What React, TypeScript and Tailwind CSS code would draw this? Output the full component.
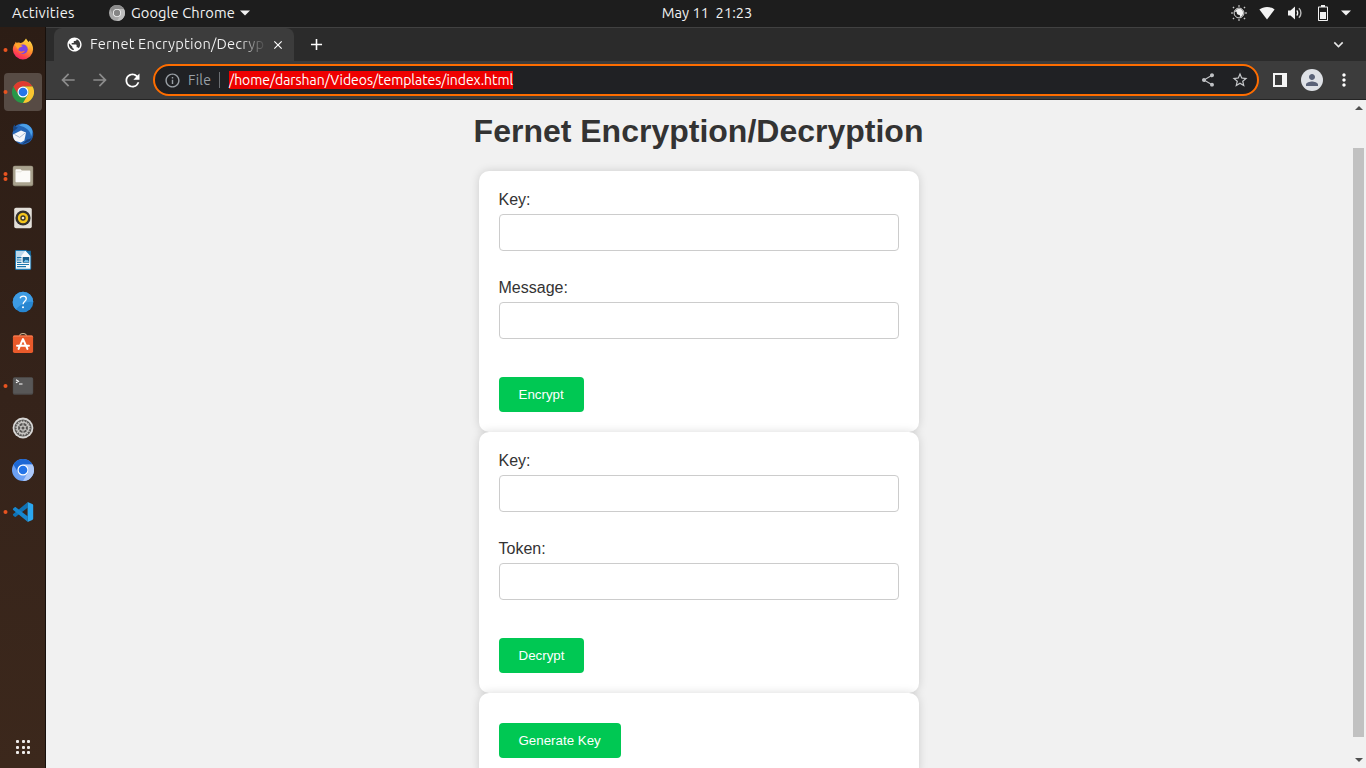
import type { ReactNode } from "react";
import {
  MdAdd,
  MdArrowBack,
  MdArrowForward,
  MdClose,
  MdExpandMore,
  MdInfoOutline,
  MdMoreVert,
  MdPerson,
  MdPublic,
  MdRefresh,
  MdShare,
  MdStarBorder,
} from "react-icons/md";

/* ---------- Dock icons ---------- */

function FirefoxIcon() {
  return (
    <svg className="-translate-y-px" width="22" height="22" viewBox="0 0 22 22">
      <defs>
        <linearGradient id="fx" x1="0.8" y1="0" x2="0.3" y2="1">
          <stop offset="0" stopColor="#ffe14a" />
          <stop offset="0.45" stopColor="#ff9a2a" />
          <stop offset="0.8" stopColor="#ff4150" />
          <stop offset="1" stopColor="#f0246e" />
        </linearGradient>
      </defs>
      <path
        d="M14 .4c1 1.300 1.300 2 2.600 3.500 1-.2.600-1 .8-1.500 2 2 4 5.400 3.700 9.200A10.100 10.100 0 0 1 11 21.400 10.100 10.100 0 0 1 .8 11.500c0-2.700 1-4.700 2.300-6.300l.6-1.500 1.200 1.200c1-.5 2-.3 3.300 0C10 5 12 3.500 14 .4Z"
        fill="url(#fx)"
      />
      <circle cx="11" cy="11.200" r="4.700" fill="#7a45e5" />
      <path d="M2.600 6.700c1.800-1.500 4-1.200 5.400.6 1.200-.3 2.300.2 2.800 1-1.300.1-1.700.9-3 1.200-1.300.4-1.500 1.200-1.100 2.300-1.800-1-1.900-3-4.100-5.100Z" fill="#ffa62b" />
      <path d="M12 6c3 .2 4.500 2.400 4.300 5.100 2-2.800.7-6-1.700-7.900C14 4.700 13 5.500 12 6Z" fill="#ffbf35" />
      <path d="M6.200 11.800c.8 1.400 2.300 2 4 1.600 1-.3 1.700-.8 2.500-.5-.3 1.700-2.600 2.700-4.700 2-1.100-.4-1.700-1.600-1.800-3.100Z" fill="#ff7139" />
    </svg>
  );
}

function BrowserWheel({ a, b, c, core, ring, size }: { a: string; b: string; c: string; core: string; ring: string; size: number }) {
  return (
    <svg width={size} height={size} viewBox="0 0 48 48">
      <circle cx="24" cy="24" r="24" fill={b} />
      <path d="M3.200 12a24 24 0 0 1 41.600 0H24a12 12 0 0 0-10.400 18Z" fill={a} />
      <path d="M44.800 12A24 24 0 0 1 24 48l10.400-18A12 12 0 0 0 24 12Z" fill={c} />
      <circle cx="24" cy="24" r="12" fill={ring} />
      <circle cx="24" cy="24" r="9.500" fill={core} />
    </svg>
  );
}

function ThunderbirdIcon() {
  return (
    <svg width="22" height="22" viewBox="0 0 22 22">
      <path d="M3 3.500C7-.5 15-.6 19 4.500c3 4 3 9 0 13-3 3.500-8 5-12 3C3 18.500 0 14.500.6 9.500L3 3.500Z" fill="#2565b5" />
      <path d="M7 2.500c5-3 11-1 13 4 1 3-.2 5-1 7C19 8 14 4 7 2.500Z" fill="#4ba0e8" />
      <path d="M1 6c0-2 .8-3.700 1.500-4.500C3 3.500 4 4.500 6 4.500L2 8Z" fill="#194783" />
      <path d="m1 11.500 8-4 5 1.900-1.600 8-3.500 2-5.500-1.300C1.500 16 .7 13.500 1 11.500Z" fill="#f4f6fa" />
      <path d="m2.500 11.500 5.200 2.900 5.500-4.400" fill="none" stroke="#a8b8d0" strokeWidth="1" />
      <path d="m10 21.500 8-3.500 2.500-4.500c-1 2-3.500 3-5.500 3l-.6.700Z" fill="#183e78" />
    </svg>
  );
}

function FilesIcon() {
  return (
    <svg width="22" height="22" viewBox="0 0 22 22">
      <rect x=".8" y=".8" width="20.400" height="20.400" rx="2" fill="#8f8975" />
      <rect x="1.300" y="1.300" width="19.400" height="18.600" rx="1.600" fill="#aaa38f" />
      <path d="M3.500 5.200c0-.7.400-1 1-1h4l1.300 1.300h7.500c.7 0 1 .4 1 1v9.700c0 .7-.4 1-1 1H4.500c-.6 0-1-.3-1-1Z" fill="#fbfaf8" />
      <path d="M4.200 6.800h4.700l1-1" stroke="#dcd8ce" strokeWidth=".7" fill="none" />
    </svg>
  );
}

function RhythmboxIcon() {
  return (
    <svg width="22" height="22" viewBox="0 0 22 22">
      <rect x="2.200" y=".8" width="17.600" height="20.400" rx="1.800" fill="#e3dfd9" />
      <circle cx="11" cy="11" r="7.600" fill="#33312e" />
      <circle cx="11" cy="11" r="5.200" fill="#f4c51d" />
      <circle cx="11" cy="11" r="2.700" fill="#3b3729" />
      <circle cx="11" cy="11" r="1.300" fill="#f3ead0" />
    </svg>
  );
}

function WriterIcon() {
  return (
    <svg width="22" height="22" viewBox="0 0 22 22">
      <path d="M4.500 1h9.700l5 5.500v13c0 .9-.6 1.500-1.500 1.500H4.500C3.600 21 3 20.400 3 19.500v-17C3 1.600 3.600 1 4.500 1Z" fill="#1f77ae" />
      <path d="M4 2h9.800l4.500 5v12.800H4Z" fill="#f6f9fb" />
      <path d="M3 1.500h10.500L3 15Z" fill="#2383bd" opacity=".28" />
      <path d="M14 1.800h4.800v5Z" fill="#1671aa" />
      <path d="M5 8.700h4.500M5 11h4.500M5 13.300h4.500M5 15.500h12M5 17.700h9" stroke="#1c76ad" strokeWidth="1.200" />
      <rect x="10.700" y="8" width="6.500" height="5.700" fill="#175d8a" />
      <path d="m11.500 13 2.300-2.600 1.200 1.200.8-.7 1.200 2.100Z" fill="#72c1ed" />
    </svg>
  );
}

function HelpIcon() {
  return (
    <svg width="22" height="22" viewBox="0 0 22 22">
      <circle cx="11" cy="11" r="10.300" fill="#2786d1" />
      <path d="M.7 11a10.300 10.300 0 0 1 20.600 0c-6-1-12 2-17.500 7.300A10 10 0 0 1 .7 11Z" fill="#3d9be3" />
      <path d="M8 7.200c.6-1.400 1.700-2 3.200-2 1.800 0 3.100 1 3.100 2.600 0 2.400-3.200 2.600-3.200 5.500" fill="none" stroke="#fff" strokeWidth="1.300" />
      <circle cx="11" cy="16.200" r="1" fill="#fff" />
    </svg>
  );
}

function SoftwareIcon() {
  return (
    <svg className="-translate-y-px" width="22" height="22" viewBox="0 0 22 22">
      <path d="M7.500 4.500C7.500.5 14.500.5 14.500 4.500" fill="none" stroke="#d1b795" strokeWidth="1.200" />
      <rect x=".9" y="3.500" width="20.200" height="17.500" rx="1.700" fill="#e95a2b" />
      <path d="M1 4.800c0-.8.700-1.300 1.600-1.300h16.800c.9 0 1.600.5 1.600 1.300Z" fill="#f17b51" />
      <path d="m6.500 17 4.500-10 4.500 10M5 13.800h12" fill="none" stroke="#fff" strokeWidth="1.900" strokeLinecap="round" strokeLinejoin="round" />
    </svg>
  );
}

function TerminalIcon() {
  return (
    <svg width="22" height="22" viewBox="0 0 22 22">
      <rect x=".8" y="2.300" width="20.400" height="17.400" rx="1.700" fill="#4c4b4b" />
      <rect x="1.300" y="2.700" width="19.400" height="15.700" rx="1.300" fill="#585757" />
      <path d="m4 4.800 2.500 1.500L4 7.800M7 9h3.500" fill="none" stroke="#fff" strokeWidth="1.100" />
    </svg>
  );
}

function SettingsIcon() {
  return (
    <svg width="22" height="22" viewBox="0 0 22 22">
      <circle cx="11" cy="11" r="10.400" fill="#d8d7d5" />
      <circle cx="11" cy="11" r="8.600" fill="#565452" />
      <circle cx="11" cy="11" r="5.700" fill="none" stroke="#c7c5c2" strokeWidth="1.500" />
      <circle cx="11" cy="11" r="6.900" fill="none" stroke="#c7c5c2" strokeWidth="1.200" strokeDasharray="1.500 1.210" />
      <circle cx="11" cy="11" r="2.200" fill="none" stroke="#c7c5c2" strokeWidth="1.300" />
      <path d="M11 5v3.500M11 13.500V17M5.800 8l3 1.700M13.200 12.300l3 1.700M5.800 14l3-1.700M13.200 9.700l3-1.700" stroke="#c7c5c2" strokeWidth="1" />
    </svg>
  );
}

function CodeIcon() {
  return (
    <svg width="22" height="22" viewBox="0 0 22 22">
      <path d="M15.600 1.200v5.600L3.800 15.700c-.4.300-.8.300-1.100 0L1.200 14.400c-.4-.4-.4-1 0-1.400Z" fill="#0f72b5" />
      <path d="M15.600 20.800v-5.600L3.800 6.300c-.4-.3-.8-.3-1.100 0L1.200 7.600c-.4.4-.4 1 0 1.400Z" fill="#1787cf" />
      <path d="m15.600.9 4.700 2.200c.6.300.9.800.9 1.400v13c0 .6-.3 1.100-.9 1.400l-4.700 2.200Z" fill="#2ba7ef" />
    </svg>
  );
}

function DockItem({ dots = 0, active = false, children }: { dots?: number; active?: boolean; children: ReactNode }) {
  return (
    <div className="flex h-[42px] w-[45px] items-center">
      <div className="flex w-1 flex-none translate-x-[3.500px] flex-col items-center gap-px">
        {Array.from({ length: dots }, (_, i) => (
          <span key={i} className="h-1 w-1 flex-none rounded-full bg-[#e95420]" />
        ))}
      </div>
      <div className={`flex h-[38px] w-[38px] flex-none items-center justify-center rounded ${active ? "bg-[#574b44]" : ""}`}>{children}</div>
    </div>
  );
}

function Dock() {
  return (
    <aside className="flex w-[46px] flex-none flex-col border-r border-[#17100c] bg-gradient-to-b from-[#2c1d15] via-[#35231a] to-[#3c281c] pt-[2px]">
      <DockItem dots={1}><FirefoxIcon /></DockItem>
      <DockItem dots={1} active><BrowserWheel size={22} a="#df3b30" b="#279847" c="#fbc530" ring="#fff" core="#2674e8" /></DockItem>
      <DockItem><ThunderbirdIcon /></DockItem>
      <DockItem dots={2}><FilesIcon /></DockItem>
      <DockItem><RhythmboxIcon /></DockItem>
      <DockItem><WriterIcon /></DockItem>
      <DockItem><HelpIcon /></DockItem>
      <DockItem><SoftwareIcon /></DockItem>
      <DockItem dots={1}><TerminalIcon /></DockItem>
      <DockItem><SettingsIcon /></DockItem>
      <DockItem><BrowserWheel size={22} a="#1d68d5" b="#6ba0f4" c="#acc8f9" ring="#fff" core="#2474e7" /></DockItem>
      <DockItem dots={1}><CodeIcon /></DockItem>
      <div className="mt-auto mb-[14px] ml-4 grid w-[14px] grid-cols-3 gap-[2.500px]">
        {Array.from({ length: 9 }, (_, i) => (
          <span key={i} className="h-[3px] w-[3px] rounded-[1px] bg-[#efedeb]" />
        ))}
      </div>
    </aside>
  );
}

/* ---------- System bar ---------- */

function SystemTray() {
  return (
    <div className="flex items-center text-[#f2f2f2]">
      <svg className="mr-3" width="16" height="16" viewBox="0 0 16 16">
        <circle cx="8" cy="8" r="4.900" fill="none" stroke="currentColor" strokeWidth=".9" />
        <path d="M7.200 3.800a4.200 4.200 0 1 0 5 5.200C10 10 6.300 8 7.200 3.800Z" fill="currentColor" transform="rotate(180 8 8)" />
        <circle cx="8.600" cy="7" r="3" fill="currentColor" />
        <path d="M8 .2v1.600M8 14.200v1.600M.2 8h1.600M14.200 8h1.600M2 2l1 1M13 13l1 1M2 14l1-1M13 3l1-1" stroke="currentColor" strokeWidth="1.500" opacity=".8" />
      </svg>
      <svg className="mr-3" width="16" height="16" viewBox="0 0 16 16">
        <path d="M8 14.500.4 4.500C4.500 1 11.500 1 15.600 4.500Z" fill="currentColor" />
      </svg>
      <svg className="mr-3" width="16" height="16" viewBox="0 0 16 16">
        <path d="M1 5.500h2.500L8 1.500v13l-4.500-4H1Z" fill="currentColor" />
        <path d="M9.700 5.500c1.300 1.200 1.300 3.800 0 5" fill="none" stroke="currentColor" strokeWidth="1.400" />
        <path d="M11.900 3.300c2.700 2.400 2.700 7 0 9.400" fill="none" stroke="currentColor" strokeWidth="1.400" opacity=".75" />
      </svg>
      <svg className="mr-[10px]" width="16" height="16" viewBox="0 0 16 16">
        <path d="M6 0h4v1.500h2.200c.5 0 .8.300.8.800v12.900c0 .5-.3.800-.8.800H3.800c-.5 0-.8-.3-.8-.8V2.300c0-.5.300-.8.800-.8H6Z" fill="currentColor" />
        <path d="M4 2.500h8V15H4Z" fill="#1d1d1d" />
        <path d="M5 7h6v7H5Z" fill="currentColor" />
      </svg>
      <svg width="10" height="6" viewBox="0 0 10 6">
        <path d="M0 .5h10L5 5.500Z" fill="currentColor" />
      </svg>
    </div>
  );
}

function SystemBar() {
  return (
    <header className="grid h-[27px] flex-none grid-cols-[1fr_auto_1fr] items-center bg-[#1d1d1d] pb-px text-[14.667px] leading-none text-[#f2f2f2]">
      <div className="flex items-center pl-3">
        <span className="w-[97px] tracking-[0.250px]">Activities</span>
        <BrowserWheel size={16} a="#8d8d8d" b="#a8a8a8" c="#bdbdbd" ring="#f4f4f4" core="#858585" />
        <span className="ml-[6px] w-[105px] tracking-[0.080px] whitespace-nowrap">Google Chrome</span>
        <svg className="ml-1" width="10" height="6" viewBox="0 0 10 6">
          <path d="M0 .5h10L5 5.500Z" fill="currentColor" />
        </svg>
      </div>
      <div className="translate-x-[24px] whitespace-pre">May 11&nbsp; 21:23</div>
      <div className="flex justify-end pr-[15px]">
        <SystemTray />
      </div>
    </header>
  );
}

/* ---------- Browser ---------- */

function TabStrip() {
  return (
    <div className="flex h-[34px] flex-none items-stretch border-t border-[#414141] bg-[#2b2b2b] pl-2">
      <div className="flex w-[240px] items-center rounded-t-lg bg-[#3c3c3c] pl-3 text-white">
        <MdPublic className="flex-none" size={17} />
        <span className="-mt-px ml-[7px] w-[175px] bg-gradient-to-r from-[#f3f3f3] from-85% to-[#484848] bg-clip-text text-[14.667px] leading-5 tracking-[0.170px] whitespace-nowrap text-transparent">
          Fernet Encryption/Decryp
        </span>
        <MdClose className="ml-[6px] flex-none" size={14} />
      </div>
      <div className="flex w-11 items-center justify-center text-white">
        <MdAdd size={19} />
      </div>
      <div className="ml-auto flex w-[56px] items-center justify-center text-[#e8e8e8]">
        <MdExpandMore size={19} />
      </div>
    </div>
  );
}

function Toolbar() {
  return (
    <div className="flex h-[39px] flex-none items-center border-b border-[#242424] bg-[#3c3c3c] text-white">
      <MdArrowBack className="ml-3 text-[#8c8c8c]" size={20} />
      <MdArrowForward className="ml-3 text-[#8c8c8c]" size={20} />
      <MdRefresh className="ml-3" size={21} />
      <div className="ml-[10px] flex h-8 w-[1106px] items-center rounded-full border-2 border-[#fe6d00] bg-[#202124] text-[14px] leading-none">
        <MdInfoOutline className="ml-[9px] text-[#9aa0a6]" size={17} />
        <span className="ml-[7px] w-[31px] leading-[18px] tracking-[0.300px] text-[#9aa0a6]">File</span>
        <span className="h-4 w-px bg-[#6b6e72]" />
        <span className="ml-[9px] h-[18px] w-[284px] bg-[#ee0000] leading-[18px] tracking-[-0.040px] whitespace-nowrap">/home/darshan/Videos/templates/index.html</span>
        <MdShare className="ml-auto text-[#bfc1c4]" size={16} />
        <MdStarBorder className="mr-2 ml-[15px] text-[#c7c9cc]" size={18} />
      </div>
      <svg className="ml-[14px]" width="14" height="14" viewBox="0 0 14 14">
        <path d="M0 0h14v14H0Zm2 2v10h7V2Z" fill="#f5f5f5" fillRule="evenodd" />
      </svg>
      <div className="ml-[14px] flex h-[22px] w-[22px] items-center justify-center rounded-full bg-[#dee1e6] text-[#5a6278]">
        <MdPerson size={18} />
      </div>
      <MdMoreVert className="ml-[11px]" size={20} />
    </div>
  );
}

function Field({ label }: { label: string }) {
  return (
    <label className="mb-7 block leading-[18px]">
      {label}
      <input type="text" className="mt-[5px] block h-[37px] w-full rounded border border-[#ccc] bg-white px-2.5 outline-none" />
    </label>
  );
}

function Card({ children }: { children: ReactNode }) {
  return <form className="flex w-[440px] flex-none flex-col rounded-[10px] bg-white p-5 shadow-[0_0_10px_rgba(0,0,0,0.15)]">{children}</form>;
}

function GreenButton({ children }: { children: ReactNode }) {
  return (
    <button type="button" className="mt-[10px] h-[35px] self-start rounded bg-[#00c853] px-5 text-[13.333px] leading-[15px] text-white">
      {children}
    </button>
  );
}

function Page() {
  return (
    <div className="flex min-h-0 flex-1 bg-[#f1f1f1]">
      <main className="flex min-w-0 flex-1 flex-col items-center overflow-hidden font-['Liberation_Sans',Arial,sans-serif] text-[16px] text-[#333]">
        <h1 className="mt-[13px] mb-[21px] text-[32px] leading-[37px] font-bold">Fernet Encryption/Decryption</h1>
        <Card>
          <Field label="Key:" />
          <Field label="Message:" />
          <GreenButton>Encrypt</GreenButton>
        </Card>
        <Card>
          <Field label="Key:" />
          <Field label="Token:" />
          <GreenButton>Decrypt</GreenButton>
        </Card>
        <Card>
          <GreenButton>Generate Key</GreenButton>
        </Card>
      </main>
      <div className="flex w-[15px] flex-none flex-col items-center bg-[#f1f1f1]">
        <svg className="mt-[6px] flex-none" width="8" height="4" viewBox="0 0 8 4">
          <path d="M0 4h8L4 0Z" fill="#505050" />
        </svg>
        <div className="mt-[38px] h-[589px] w-[11px] flex-none bg-[#c1c1c1]" />
        <svg className="mt-[21px] flex-none" width="8" height="4" viewBox="0 0 8 4">
          <path d="M0 0h8L4 4Z" fill="#505050" />
        </svg>
      </div>
    </div>
  );
}

export default function App() {
  return (
    <div className="flex h-[768px] w-[1366px] flex-col overflow-hidden font-[Ubuntu,'Noto_Sans',sans-serif]">
      <SystemBar />
      <div className="flex min-h-0 flex-1">
        <Dock />
        <section className="flex min-w-0 flex-1 flex-col">
          <TabStrip />
          <Toolbar />
          <Page />
        </section>
      </div>
    </div>
  );
}
